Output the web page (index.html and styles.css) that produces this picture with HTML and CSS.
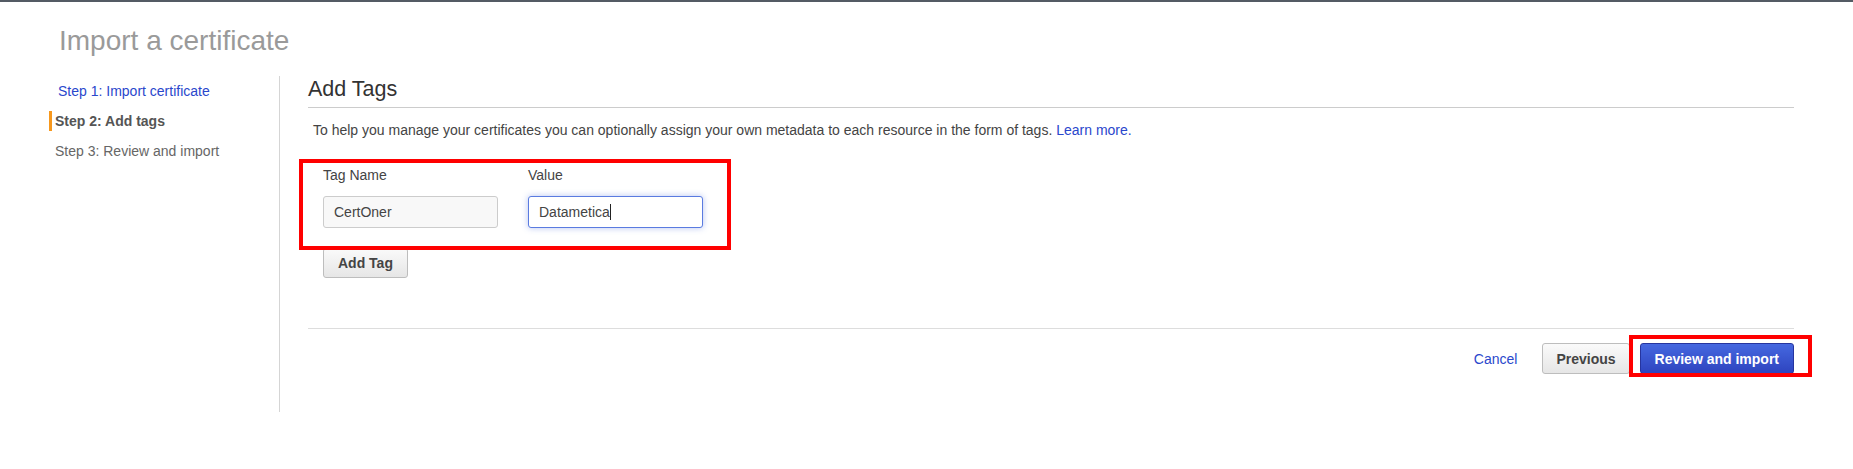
FILE: index.html
```html
<!DOCTYPE html>
<html lang="en">
<head>
<meta charset="utf-8">
<title>Import a certificate</title>
<link rel="stylesheet" href="styles.css">
</head>
<body>
<div class="topbar"></div>
<h1 class="page-title">Import a certificate</h1>
<div class="layout">
  <nav class="steps">
    <a class="step step-link" href="#">Step 1: Import certificate</a>
    <div class="step step-active">Step 2: Add tags</div>
    <div class="step step-todo">Step 3: Review and import</div>
  </nav>
  <main class="content">
    <h2 class="section-title">Add Tags</h2>
    <p class="desc">To help you manage your certificates you can optionally assign your own metadata to each resource in the form of tags. <a class="link" href="#">Learn more.</a></p>
    <div class="tags">
      <div class="tag-row">
        <div class="tag-col">
          <div class="label">Tag Name</div>
          <div class="field field-filled">CertOner</div>
        </div>
        <div class="tag-col">
          <div class="label">Value</div>
          <div class="field field-focus">Datametica<span class="caret"></span></div>
        </div>
      </div>
      <div class="highlight highlight-tags"></div>
    </div>
    <div class="add-row">
      <button class="btn btn-default" type="button">Add Tag</button>
    </div>
    <div class="footer">
      <a class="link cancel" href="#">Cancel</a>
      <button class="btn btn-default btn-prev" type="button">Previous</button>
      <div class="primary-wrap">
        <button class="btn btn-primary" type="button">Review and import</button>
        <div class="highlight highlight-primary"></div>
      </div>
    </div>
  </main>
</div>
</body>
</html>
```

FILE: styles.css
```css
* { box-sizing: border-box; }

html, body {
  margin: 0;
  padding: 0;
  background: #fff;
  font-family: "Liberation Sans", Arial, Helvetica, sans-serif;
  color: #444;
}

.topbar {
  height: 2px;
  background: #545b64;
}

.page-title {
  margin: 0;
  padding: 22px 0 0 59px;
  font-size: 28px;
  line-height: 34px;
  font-weight: normal;
  color: #9a9a9a;
}

.layout {
  display: flex;
  margin-top: 18px;
  padding: 0 59px 0 49px;
}

.steps {
  width: 231px;
  flex: none;
  border-right: 1px solid #d5d5d5;
  padding-top: 5px;
  display: flex;
  flex-direction: column;
  gap: 10px;
}

.step {
  display: block;
  font-size: 14px;
  line-height: 20px;
  text-decoration: none;
}

.step-link {
  padding-left: 9px;
  color: #2a47cc;
}

.step-active {
  border-left: 3px solid #f7981d;
  padding-left: 3px;
  font-weight: bold;
  color: #555;
}

.step-todo {
  padding-left: 6px;
  color: #666;
}

.content {
  flex: 1;
  padding: 0 0 38px 28px;
}

.section-title {
  margin: 0;
  font-size: 21.5px;
  line-height: 26px;
  font-weight: normal;
  color: #333;
  padding-bottom: 5px;
  border-bottom: 1px solid #cccccc;
}

.desc {
  margin: 12px 0 0;
  padding-left: 5px;
  font-size: 14px;
  line-height: 20px;
  color: #444;
}

.link {
  color: #2a47cc;
  text-decoration: none;
}

.tags {
  position: relative;
  margin-top: 25px;
  padding-left: 15px;
}

.tag-row {
  display: flex;
  gap: 30px;
}

.tag-col {
  display: flex;
  flex-direction: column;
  gap: 11px;
}

.label {
  font-size: 14px;
  line-height: 20px;
  color: #444;
}

.field {
  width: 175px;
  height: 32px;
  border: 1px solid #cccccc;
  border-radius: 3px;
  padding: 0 10px;
  font-size: 14px;
  line-height: 30px;
  color: #444;
  background: #fff;
  display: flex;
  align-items: center;
}

.field-filled {
  background: #f8f8f8;
}

.field-focus {
  border-color: #5a7be0;
  box-shadow: 0 0 6px rgba(90, 123, 224, 0.45);
}

.caret {
  display: inline-block;
  width: 1px;
  height: 16px;
  background: #222;
}

.highlight {
  position: absolute;
  border: 4px solid #ff0000;
  pointer-events: none;
}

.highlight-tags {
  left: -9px;
  top: -6px;
  width: 432px;
  height: 91px;
}

.add-row {
  padding-left: 15px;
  margin-top: 20px;
}

.btn {
  height: 30px;
  padding: 0 14px;
  font-family: inherit;
  font-size: 14px;
  font-weight: bold;
  border-radius: 3px;
  cursor: pointer;
}

.btn-default {
  color: #444;
  background: linear-gradient(#fafafa, #e6e6e6);
  border: 1px solid #bdbdbd;
}

.btn-prev,
.btn-primary {
  height: 31px;
}

.btn-prev {
  padding: 0 13px;
}

.btn-primary {
  color: #fff;
  background: linear-gradient(#4568e0, #2e44bf);
  border: 1px solid #26359f;
}

.footer {
  margin-top: 50px;
  border-top: 1px solid #dddddd;
  padding-top: 14px;
  display: flex;
  justify-content: flex-end;
  align-items: center;
}

.cancel {
  font-size: 14px;
  line-height: 20px;
}

.btn-prev {
  margin-left: 25px;
}

.primary-wrap {
  position: relative;
  margin-left: 10px;
  display: flex;
}

.highlight-primary {
  left: -11px;
  top: -8px;
  width: 183px;
  height: 42px;
}
```
